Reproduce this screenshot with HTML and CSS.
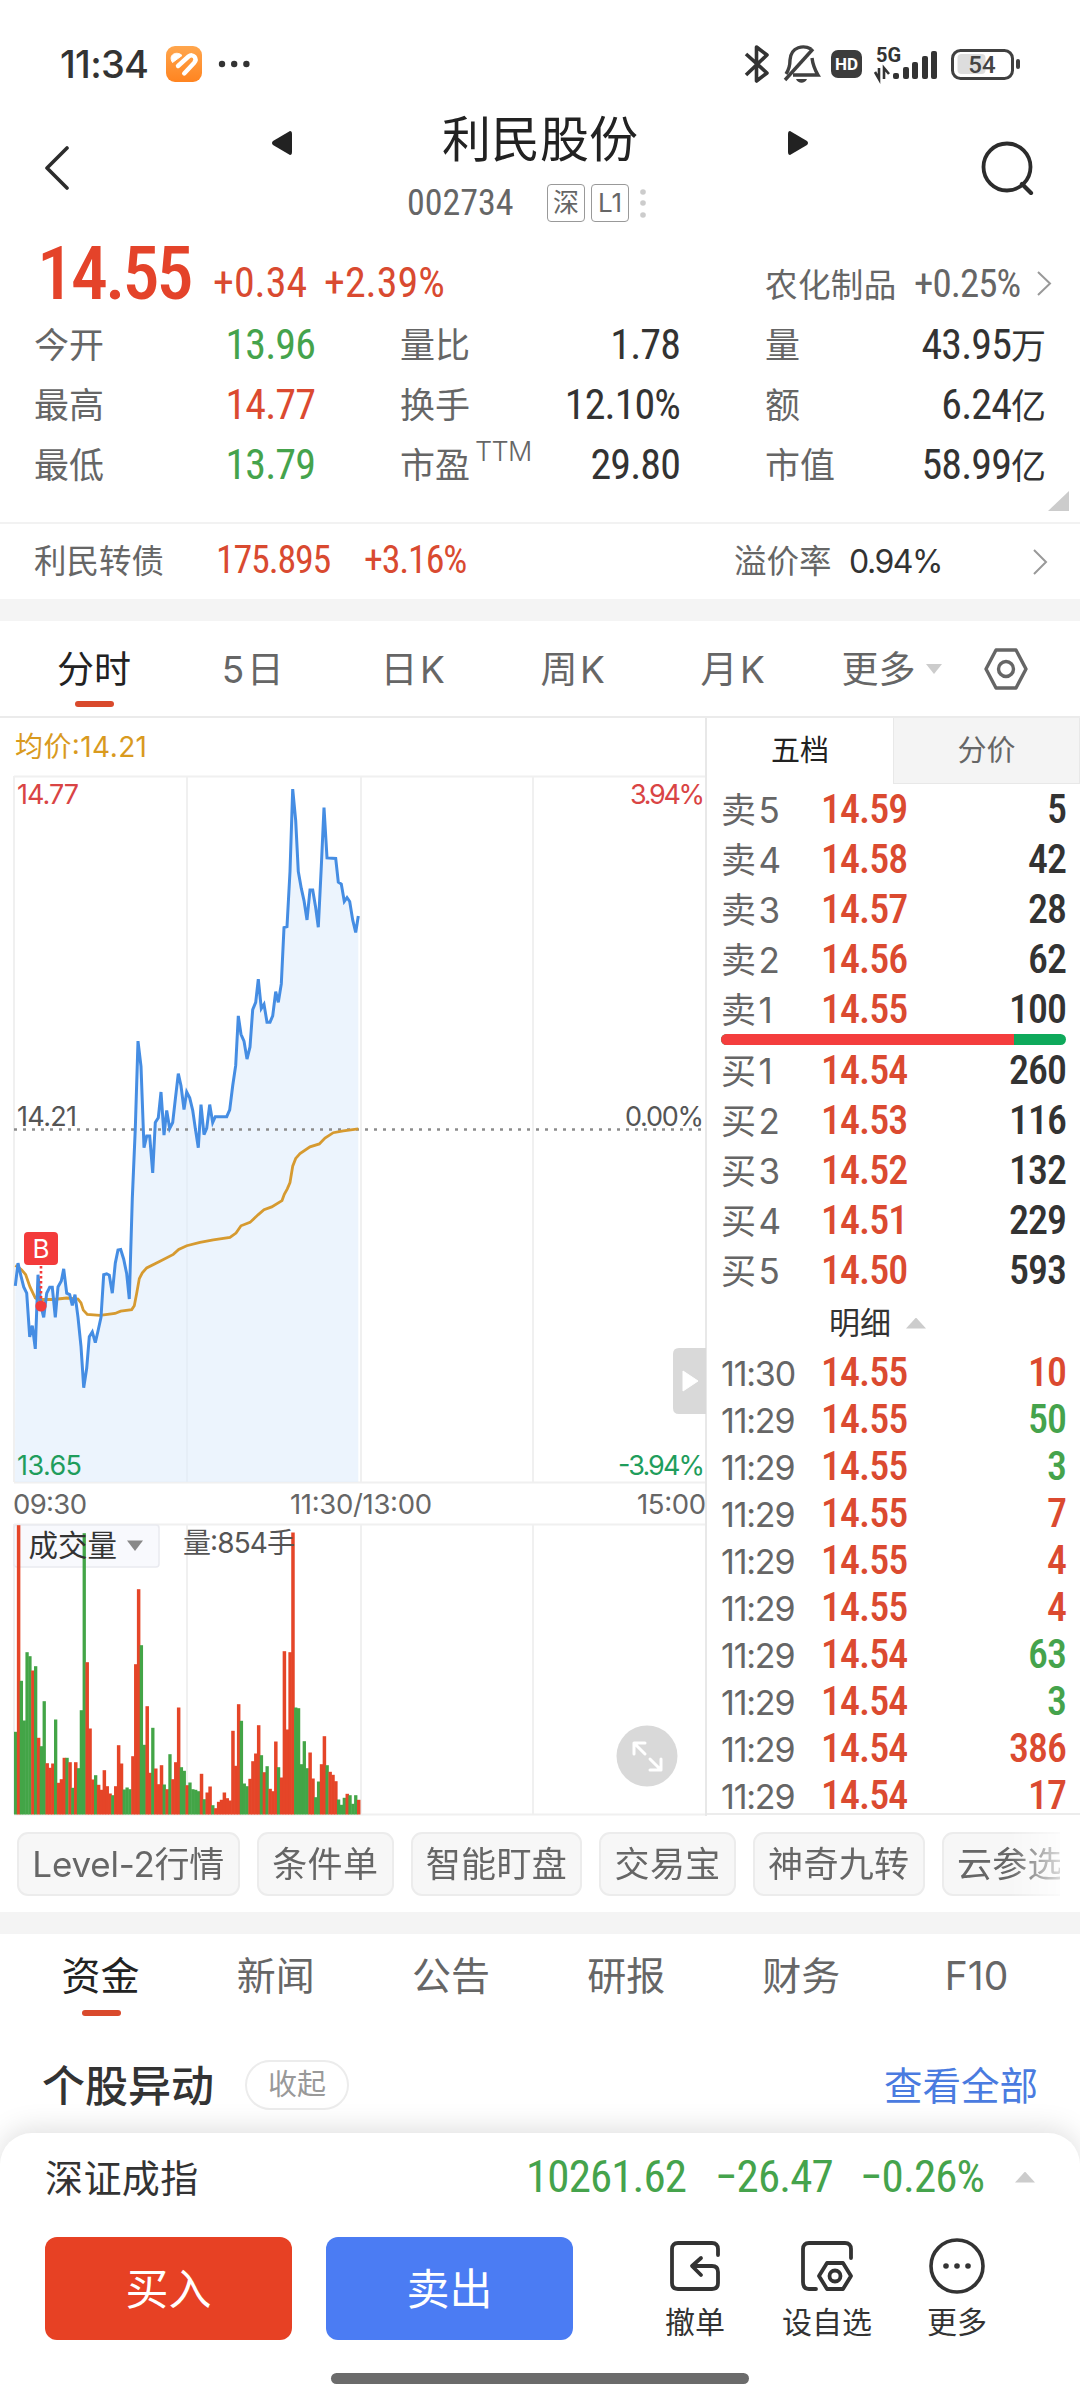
FILE: index.html
```html
<!DOCTYPE html>
<html lang="zh-CN">
<head>
<meta charset="utf-8">
<title>利民股份 002734</title>
<link rel="stylesheet" href="styles.css">
</head>
<body>
<div class="screen">
  <header class="status">
    <span class="clock">11:34</span>
    <svg class="app-icon" width="36" height="36" viewBox="0 0 36 36"><defs><linearGradient id="og" x1="0" y1="0" x2="0" y2="1"><stop offset="0" stop-color="#ffa64d"/><stop offset="1" stop-color="#ff8420"/></linearGradient></defs><rect width="36" height="36" rx="9" fill="url(#og)"/><path d="M6.500 16.500 C1.500 8.500 11 4.500 16 9.500Z" fill="#fff" stroke="#fff" stroke-linejoin="round"/><path d="M12 20 L22.500 10.500 C27 6.800 32 12.500 28 17 L18.200 27.500" fill="none" stroke="#fff" stroke-width="4.400" stroke-linecap="round" stroke-linejoin="round"/></svg>
    <svg class="more-dots" width="32" height="8" viewBox="0 0 32 8" fill="#333"><circle cx="4" cy="4" r="3.200"/><circle cx="16.200" cy="4" r="3.200"/><circle cx="28.400" cy="4" r="3.200"/></svg>
    <svg class="status-icons" width="280" height="40" viewBox="742 44 280 40">
      <path d="M746 54 L767 73 L756.500 81 V47 L767 55 L746 75" fill="none" stroke="#333" stroke-width="3.600" stroke-linejoin="round"/>
      <g fill="none" stroke="#404040" stroke-width="3.400"><path d="M811 49 C804 45 791 46 790 60 C790 68 788 71 786 74"/><path d="M812 58 C813 66 815 70 818 75 H793"/><path d="M785 80 L813 49"/></g><path d="M796 79 H807 C805 84 798 84 796 79Z" fill="#404040"/>
      <rect x="831" y="50" width="31" height="28" rx="7" fill="#3c3c3c"/><text x="846.500" y="70" class="hd">HD</text>
      <text x="876" y="62" class="g5">5G</text>
      <path d="M875 72 L879 79 V68 M884 79 V68 L889 74" fill="none" stroke="#333" stroke-width="2.600"/>
      <g fill="#333"><rect x="893" y="73" width="6" height="6" rx="2"/><rect x="903" y="67" width="6" height="12" rx="2"/><rect x="912" y="62" width="6" height="17" rx="2"/><rect x="922" y="56" width="6" height="23" rx="2"/><rect x="931" y="51" width="6" height="28" rx="2"/></g>
      <rect x="957.500" y="54" width="28" height="20" rx="4" fill="#ddd"/><rect x="952.500" y="50.500" width="60" height="28" rx="8" fill="none" stroke="#404040" stroke-width="3"/><rect x="1016" y="59" width="4" height="10" rx="2" fill="#404040"/><text x="982" y="73" class="bat">54</text>
    </svg>
  </header>

  <div class="titlebar">
    <svg width="26" height="44" viewBox="0 0 26 44"><path d="M23 2 L3 22 L23 42" fill="none" stroke="#2c2c2c" stroke-width="3.600" stroke-linecap="round" stroke-linejoin="round"/></svg>
    <div class="title-mid">
      <div class="name-row">
        <svg width="20" height="24" viewBox="0 0 20 24"><path d="M18 0 Q20 0 20 3 V21 Q20 24 18 24 L1 14 Q-1 12 1 10Z" fill="#222"/></svg>
        <h1>利民股份</h1>
        <svg width="20" height="24" viewBox="0 0 20 24"><path d="M2 0 Q0 0 0 3 V21 Q0 24 2 24 L19 14 Q21 12 19 10Z" fill="#222"/></svg>
      </div>
      <div class="code-row"><span class="num code">002734</span><span class="tag">深</span><span class="tag">L1</span><svg width="8" height="30" viewBox="0 0 8 30" fill="#ccc"><circle cx="4" cy="4" r="2.800"/><circle cx="4" cy="15" r="2.800"/><circle cx="4" cy="27" r="2.800"/></svg></div>
    </div>
    <svg width="54" height="54" viewBox="0 0 54 54"><circle cx="26" cy="26" r="23.500" fill="none" stroke="#2c2c2c" stroke-width="3.800"/><path d="M41 43 L50 52" stroke="#2c2c2c" stroke-width="4.200" stroke-linecap="round"/></svg>
  </div>

  <section class="quote">
    <div class="price-row">
      <b class="num big">14.55</b><span class="num chg">+0.34</span><span class="num chg">+2.39%</span>
      <span class="sector">农化制品</span><span class="num sector-pct">+0.25%</span>
      <svg class="chev" width="16" height="25" viewBox="0 0 16 25"><path d="M2 1 L14 12.500 L2 24" fill="none" stroke="#999" stroke-width="2"/></svg>
    </div>
    <div class="grid">
      <span>今开</span><span class="num dn">13.96</span><span>量比</span><span class="num">1.78</span><span>量</span><span class="num">43.95<small>万</small></span>
      <span>最高</span><span class="num up">14.77</span><span>换手</span><span class="num">12.10%</span><span>额</span><span class="num">6.24<small>亿</small></span>
      <span>最低</span><span class="num dn">13.79</span><span>市盈<i>TTM</i></span><span class="num">29.80</span><span>市值</span><span class="num">58.99<small>亿</small></span>
    </div>
    <div class="corner"></div>
  </section>
  <section class="bond">
    <span>利民转债</span><span class="num bp">175.895</span><span class="num bc">+3.16%</span><span class="prem">溢价率</span><span class="pv">0.94%</span>
    <svg class="chev" width="16" height="26" viewBox="0 0 16 26"><path d="M2 1 L14 13 L2 25" fill="none" stroke="#999" stroke-width="2"/></svg>
  </section>
  <div class="band"></div>

  <nav class="ktabs">
    <a class="on">分时</a><a>5日</a><a>日K</a><a>周K</a><a>月K</a><a>更多<em></em></a>
    <svg width="44" height="42" viewBox="0 0 44 42" fill="none" stroke="#666" stroke-width="3.400" stroke-linejoin="round"><path d="M12 2 H32 L42 21 L32 40 H12 L2 21Z"/><circle cx="22" cy="21" r="7.500"/></svg>
  </nav>

  <main class="board">
    <svg id="chart" class="chart" width="707" height="1098" viewBox="0 718 707 1098">
      <text x="15" y="757" class="t avg" textLength="132">均价:14.21</text>
      <g fill="none" stroke="#f0f0f0" stroke-width="2">
        <path d="M14 776.500 H706 M14 1482.500 H706 M14 1524.500 H706 M14 776 V1482 M14 1524 V1814 M187 776 V1482 M187 1524 V1814 M361 776 V1482 M361 1524 V1814 M533 776 V1482 M533 1524 V1814 M14 1814.500 H707"/>
      </g>
      <g id="price"></g>
      <path d="M14 1129.500 H706" stroke="#8c8c8c" stroke-width="2.600" stroke-dasharray="3 6"/>
      <g id="lines" fill="none"></g>
      <path d="M706 718 V1816" stroke="#e8e8e8" stroke-width="2"/>
      <path d="M41 1266 V1302" stroke="#f33b3b" stroke-width="2.600" stroke-dasharray="2.500 2.500"/><circle cx="41" cy="1306" r="5.600" fill="#f33b3b"/><rect x="24" y="1232" width="34" height="33" rx="4" fill="#f33b3b"/><text x="41" y="1258" class="t mark">B</text>
      <text x="17" y="804" class="t upl" textLength="62">14.77</text><text x="705" y="804" class="t upl end" textLength="75">3.94%</text>
      <text x="17" y="1126" class="t mid" textLength="60">14.21</text><text x="704" y="1126" class="t mid end" textLength="79">0.00%</text>
      <text x="17" y="1475" class="t dnl" textLength="65">13.65</text><text x="705" y="1475" class="t dnl end" textLength="87">-3.94%</text>
      <text x="13" y="1514" class="t time" textLength="74">09:30</text><text x="361" y="1514" class="t time c" textLength="142">11:30/13:00</text><text x="706" y="1514" class="t time end" textLength="69">15:00</text>
      <path d="M679 1348 H706 V1414 H679 Q673 1414 673 1408 V1354 Q673 1348 679 1348Z" fill="#d9d9d9"/><path d="M683 1371 L698 1381 L683 1391Z" fill="#fff" stroke="#fff" stroke-linejoin="round"/>
      <rect x="14" y="1525" width="145" height="42" rx="3" fill="#f8f9fd" stroke="#e9eaf0" stroke-width="1.500"/>
      <g id="volume"></g>
      <text x="28.500" y="1556" class="t vol">成交量</text><path d="M127 1540.500 H143 L135 1551Z" fill="#888"/>
      <text x="183" y="1553" class="t vnum" textLength="112">量:854手</text>
      <circle cx="647" cy="1756" r="30.500" fill="#d9d9d9"/><path d="M634 1754 V1743 H645 M634 1743 L645 1754 M661 1759 V1770 H650 M661 1770 L650 1759" fill="none" stroke="#fff" stroke-width="3" stroke-linecap="round" stroke-linejoin="round"/>
    </svg>
    <aside class="book">
      <div class="btabs"><b>五档</b><span>分价</span></div>
      <div id="asks" class="levels"></div>
      <div class="ratio"><i></i></div>
      <div id="bids" class="levels"></div>
      <div class="detail">明细<em></em></div>
      <div id="ticks" class="ticks"></div>
    </aside>
  </main>

  <div class="chips"><span>Level-2行情</span><span>条件单</span><span>智能盯盘</span><span>交易宝</span><span>神奇九转</span><span>云参选</span></div>
  <div class="band b2"></div>
  <nav class="ntabs"><a class="on">资金</a><a>新闻</a><a>公告</a><a>研报</a><a>财务</a><a>F10</a></nav>
  <div class="sect"><h2>个股异动</h2><span class="pill">收起</span><a>查看全部</a></div>

  <footer class="sheet">
    <div class="index"><span>深证成指</span><span class="num i1">10261.62</span><span class="num i2">−26.47</span><span class="num i3">−0.26%</span><em></em></div>
    <div class="actions">
      <button class="buy">买入</button><button class="sell">卖出</button>
      <div class="act a1"><svg width="54" height="54" viewBox="0 0 54 54" fill="none" stroke="#333" stroke-width="3.800" stroke-linecap="round" stroke-linejoin="round"><path d="M50 16 V10 Q50 4 44 4 H10 Q4 4 4 10 V44 Q4 50 10 50 H44 Q50 50 50 44 V33 Q50 27 44 27 H25"/><path d="M33 19 L24 27 L33 36"/></svg>撤单</div>
      <div class="act a2"><svg width="54" height="54" viewBox="0 0 54 54" fill="none" stroke="#333" stroke-width="3.800" stroke-linecap="round" stroke-linejoin="round"><path d="M51 19 V10 Q51 4 45 4 H9 Q3 4 3 10 V43 Q3 50 9 50 H16"/><path d="M27 24 H43 L51 37 L43 50 H27 L19 37Z"/><circle cx="35" cy="37" r="5.500"/></svg>设自选</div>
      <div class="act a3"><svg width="56" height="56" viewBox="0 0 56 56"><circle cx="28" cy="28" r="26" fill="none" stroke="#333" stroke-width="3.600"/><g fill="#333"><circle cx="17" cy="28" r="2.800"/><circle cx="28" cy="28" r="2.800"/><circle cx="39" cy="28" r="2.800"/></g></svg>更多</div>
    </div>
    <div class="home"></div>
  </footer>
</div>
<script src="script.js"></script>
</body>
</html>
```
FILE: styles.css
```css
* { box-sizing: border-box; }
body { margin: 0; background: #fff; font-family: Inter, "Noto Sans CJK SC", sans-serif; color: #333; }
h1, h2 { margin: 0; font-weight: 400; }
i, em { font-style: normal; }
svg { display: block; flex: none; }
.screen { width: 1080px; height: 2400px; overflow: hidden; display: flex; flex-direction: column; white-space: nowrap; }
.screen > * { flex: none; }
.num { font-family: Roboto, "Noto Sans CJK SC", sans-serif; font-stretch: 75%; font-weight: 450; }

.status { height: 108px; padding: 20px 58px 0 60px; display: flex; align-items: center; }
.clock { font-size: 38px; font-weight: 500; letter-spacing: -.7px; width: 106px; }
.more-dots { margin-left: 16px; }
.status-icons { margin-left: auto; }
.hd { font: 700 17px Roboto; fill: #fff; text-anchor: middle; }
.g5 { font: 700 20px Roboto; fill: #333; }
.bat { font: 500 24px Roboto; fill: #444; text-anchor: middle; }

.titlebar { height: 124px; padding: 0 45px 0 44px; display: flex; align-items: flex-start; }
.titlebar > svg:first-child { margin-top: 38px; }
.titlebar > svg:last-child { margin-top: 33px; margin-left: auto; }
.title-mid { width: 536px; margin-left: 202px; }
.name-row { height: 64px; display: flex; align-items: center; justify-content: space-between; }
.name-row svg { margin-top: 6px; }
h1 { font-size: 49px; line-height: 64px; color: #222; }
.code-row { height: 62px; display: flex; align-items: center; padding-left: 135px; }
.code { font-size: 36px; font-weight: 400; color: #666; width: 140px; }
.tag { width: 38px; height: 38px; border: 1.500px solid #999; border-radius: 4px; font-size: 26px; line-height: 36px; text-align: center; color: #666; margin-right: 6px; }
.code-row svg { margin-left: 4px; }

.quote { height: 290px; padding: 0 28px 0 35px; position: relative; }
.price-row { height: 82px; display: flex; align-items: baseline; line-height: 80px; }
.big { font-size: 74px; color: #e4432a; width: 178px; padding-left: 2px; letter-spacing: -3px; font-weight: 500; position: relative; top: 2px; }
.chg { font-size: 42px; color: #d94a30; font-weight: 400; width: 111px; }
.sector { font-size: 32.500px; line-height: 78px; letter-spacing: .4px; color: #666; margin-left: 330px; width: 149px; }
.sector-pct { font-size: 39px; font-weight: 400; color: #666; width: 121px; letter-spacing: -1px; }
.chev { align-self: center; }
.price-row > * { flex: none; }
.price-row .chev { margin-top: 20px; margin-left: 1px; }
.grid { display: grid; grid-template-columns: 150px 131px 234px 131px 169px 197px; grid-auto-rows: 60px; line-height: 63px; font-size: 35px; color: #666; margin-left: -1px; }
.grid > span:nth-child(6n+3), .grid > span:nth-child(6n+5) { padding-left: 85px; }
.grid > .num { font-size: 42px; line-height: 61px; letter-spacing: -.9px; text-align: right; color: #333; }
.grid small { font-size: 35px; font-weight: 400; letter-spacing: 0; }
.grid .up, .up { color: #db4a30 !important; }
.grid .dn, .dn { color: #45a34c !important; }
.grid i { font-size: 27px; position: relative; top: -17px; margin-left: 5px; font-weight: 300; letter-spacing: -.7px; }
.corner { position: absolute; left: 1048px; top: 259px; width: 21px; height: 20px; background: #ccc; clip-path: polygon(100% 0, 100% 100%, 0 100%); }
.bond { height: 77px; border-top: 2px solid #f2f2f2; padding-left: 34px; display: flex; line-height: 73px; font-size: 32.500px; color: #666; align-items: baseline; }
.bond > span:first-child { width: 182px; }
.bond .num { font-size: 38px; color: #d94a30; font-weight: 400; letter-spacing: -1.200px; }
.bond .bp { width: 148px; } .bond .bc { width: 370px; }
.prem { width: 115px; }
.bond .pv { font-size: 32px; letter-spacing: -1.500px; color: #333; width: 183px; }
.band { height: 22px; background: #f4f4f4; }

.ktabs { height: 97px; border-bottom: 2px solid #ebebeb; display: flex; padding-left: 14px; color: #666; }
.ktabs a { width: 160px; text-align: center; font-size: 37px; line-height: 98px; position: relative; }
.ktabs a:nth-child(n+2) { letter-spacing: 2.500px; }
.ktabs a:nth-child(6) { width: 170px; padding-right: 41px; letter-spacing: 0; }
.ktabs svg { margin: 27px 0 0 0; }
.ktabs em { position: absolute; right: 42px; top: 43px; width: 16px; height: 10px; background: #ccc; clip-path: polygon(0 0, 100% 0, 50% 100%); }
a.on { color: #222; position: relative; }
a.on::after { content: ""; position: absolute; left: 50%; margin-left: -19px; bottom: 9px; width: 39px; height: 6px; border-radius: 3px; background: #d94a2c; }

.board { display: flex; height: 1097px; }
.t { font-family: Inter, "Noto Sans CJK SC", sans-serif; font-size: 27px; }
.end { text-anchor: end; } .c { text-anchor: middle; }
.avg { font-size: 28px; fill: #d99a1e; }
.upl { fill: #d94444; } .dnl { fill: #1f9d5c; } .mid { fill: #555; }
.time { fill: #666; font-size: 27.500px; }
.mark { fill: #fff; font-size: 26px; text-anchor: middle; }
.vol { font-size: 29.500px; fill: #333; } .vnum { font-size: 28px; fill: #555; }

.book { width: 373px; border-bottom: 2px solid #ececec; }
.btabs { height: 67px; display: flex; font-size: 29px; line-height: 66px; text-align: center; }
.btabs b { width: 186px; font-weight: 400; color: #222; }
.btabs span { flex: 1; height: 66px; background: #f4f4f4; border: 1px solid #e8e8e8; border-top: 0; color: #666; }
.levels, .ticks { padding: 0 14px 0 14px; }
.row { display: grid; grid-template-columns: 100px 113px 1fr; height: 50px; line-height: 50px; align-items: baseline; font-size: 34px; color: #666; }
.levels .row span:first-child { font-size: 35px; letter-spacing: 2.500px; }
.row .num { font-size: 40px; letter-spacing: -1px; color: #333; font-weight: 460; }
.row .num:last-child { text-align: right; }
.ratio { height: 11px; margin: -1px 14px 0 14px; border-radius: 6px; background: #0ea95b; overflow: hidden; }
.ratio i { display: block; width: 293px; height: 11px; background: #f43d3d; }
#bids { padding-top: 1px; margin-bottom: 1px; }
.detail { height: 52px; line-height: 52px; font-size: 31px; padding-left: 122px; display: flex; align-items: center; }
.detail em { width: 20px; height: 11px; margin-left: 15px; background: #ccc; clip-path: polygon(50% 0, 100% 100%, 0 100%); }
.ticks .row { height: 47px; line-height: 47px; font-size: 34px; }
.ticks .row span:first-child { letter-spacing: -1.200px; }

.chips { height: 97px; padding: 17px 0 0 17px; display: flex; gap: 17px; overflow: hidden; width: 1060px; -webkit-mask: linear-gradient(90deg, #000 1010px, rgba(0,0,0,.25) 1060px); }
.chips span { flex: none; height: 64px; border: 2px solid #ececec; border-radius: 11px; background: #f7f7f7; font-size: 35px; line-height: 60px; padding: 0 13.300px; color: #666; letter-spacing: .3px; }
.chips span:first-child { letter-spacing: -.2px; width: 223px; }
.b2 { height: 22px; }
.ntabs { height: 91px; display: flex; padding-left: 13px; color: #666; }
.ntabs a { width: 175.200px; text-align: center; font-size: 39px; line-height: 84px; }
.sect { height: 116px; display: flex; align-items: center; padding-left: 42px; }
h2 { font-size: 43px; font-weight: 500; color: #333; }
.pill { width: 104px; height: 50px; border: 2px solid #ececec; border-radius: 25px; margin: 3px 0 0 31px; font-size: 29px; line-height: 46px; text-align: center; color: #999; }
.sect a { font-size: 38.500px; color: #4a7be0; margin-left: auto; margin-right: 42px; }

.sheet { position: absolute; top: 2133px; left: 0; width: 1080px; height: 267px; background: #fff; border-radius: 32px 32px 0 0; box-shadow: 0 -4px 28px rgba(0,0,0,.13); padding: 0 45px; }
.index { height: 88px; display: flex; line-height: 88px; font-size: 38px; align-items: baseline; }
.index > span:first-child { width: 481px; letter-spacing: .4px; }
.index .num { font-size: 45px; font-weight: 400; color: #45a34c; letter-spacing: -.9px; }
.i1 { width: 189px; } .i2 { width: 145px; } .i3 { width: 155px; }
.index em { width: 20px; height: 11px; align-self: center; background: #ccc; clip-path: polygon(50% 0, 100% 100%, 0 100%); }
.actions { display: flex; padding-top: 16px; height: 152px; }
button { width: 247px; height: 103px; border: 0; border-radius: 12px; color: #fff; font: 400 43px Inter, "Noto Sans CJK SC", sans-serif; line-height: 102px; padding: 0; }
.buy { background: #e74124; } .sell { background: #4b7cf3; margin-left: 34px; }
.act { display: flex; flex-direction: column; align-items: center; font-size: 30px; line-height: 56px; }
.a1 { width: 120px; margin-left: 62px; } .a2 { width: 120px; margin-left: 12px; } .a3 { width: 120px; margin-left: 10px; }
.act svg { height: 56px; margin: 1px 0 0; }
.home { width: 418px; height: 11px; border-radius: 6px; background: #6b6b6b; margin-left: 286px; }
```
FILE: script.js
```js
// One volume bar per trading minute: colour letter followed by the bar height.
const bars = "g248 r868 g401 g282 g487 g475 r432 g445 r230 g205 g340 r154 r140 r153 g285 r95 r106 r170 g170 r157 g80 r157 g139 g313 g844 r457 r258 r105 g118 r89 r74 r133 r85 r63 g58 r85 r208 r153 g75 g81 g76 r175 r451 r676 g508 g209 r325 r125 g260 r138 r91 r148 g90 r76 g181 r106 r157 r321 g142 g131 r88 g96 g76 g74 g70 r122 g46 r66 r84 g28 r19 r38 r44 r66 r49 r42 r251 r146 r331 g281 g93 g85 r107 r160 r183 r268 g178 r127 g145 r77 r70 r219 g142 r111 r490 r255 r487 r846 g321 g319 g151 g220 g139 r186 r108 g52 g99 r151 r235 g148 r128 r119 r100 g45 g29 g50 r62 g58 g32 g58 r44".split(" ");
document.getElementById("volume").innerHTML = bars.map((b, i) => {
  const h = b.slice(1) / 3;
  return `<rect x="${(14 + i * 2.858).toFixed(2)}" y="${(1814.5 - h).toFixed(1)}" width="${b[0] === "r" ? 3.5 : 3.3}" height="${h.toFixed(1)}" fill="${b[0] === "r" ? "#e54528" : "#43a547"}"/>`;
}).join("");

// Intraday curves, in chart units.
const price = "46,1085 54,1038 63,1065 71,1087 80,1100 89,1190 97,1167 106,1215 114,1062 123,1127 131,1150 140,1100 149,1088 157,1088 166,1150 174,1087 184,1075 191,1050 200,1100 209,1103 217,1125 225,1103 234,1150 243,1210 251,1295 260,1255 268,1190 277,1180 286,1202 294,1178 303,1150 311,1062 320,1060 328,1063 337,1100 346,1038 354,1011 362,1010 371,1030 380,1060 388,1112 397,905 406,760 414,580 423,632 432,800 440,776 449,776 458,852 466,748 475,738 483,685 492,774 500,723 509,760 518,748 526,700 535,647 543,672 552,721 560,685 569,697 578,723 586,760 595,800 603,711 612,773 620,760 629,711 638,748 646,736 680,736 689,722 698,672 707,630 715,528 723,566 732,580 741,617 750,592 758,515 767,500 775,452 784,513 792,504 801,541 810,541 818,528 827,478 835,500 844,462 852,346 861,344 870,230 878,60 887,125 895,230 904,265 912,290 921,330 930,268 938,268 947,305 955,345 964,220 972,98 981,202 1007,203 1015,252 1024,256 1033,292 1041,284 1049,292 1058,330 1067,356 1075,322";
const average = "46,1043 54,1046 65,1052 77,1062 90,1087 106,1110 115,1113 160,1113 200,1110 234,1112 243,1120 250,1135 262,1144 300,1146 345,1142 362,1137 395,1134 403,1126 410,1100 418,1070 427,1058 440,1048 480,1034 520,1020 536,1010 560,1002 600,995 640,990 690,985 708,976 723,961 750,954 775,938 792,928 815,922 846,909 853,896 862,885 870,872 878,838 887,822 900,812 930,798 958,792 975,780 1000,769 1030,765 1075,761";
const plot = s => s.split(" ").map(p => {
  const [x, y] = p.split(",");
  return `${(x / 3).toFixed(1)},${(760 + y / 2.0632).toFixed(1)}`;
}).join(" ");
document.getElementById("price").innerHTML = `<polygon points="15,1482 ${plot(price)} 358.300,1482" fill="#e1eefc" fill-opacity=".62"/>`;
document.getElementById("lines").innerHTML =
  `<polyline points="${plot(average)}" stroke="#d69a30" stroke-width="2.800"/><polyline points="${plot(price)}" stroke="#458de3" stroke-width="3"/>`;

const level = ([name, p, v]) => `<div class="row"><span>${name}</span><span class="num up">${p}</span><span class="num">${v}</span></div>`;
document.getElementById("asks").innerHTML = [["卖5", "14.59", 5], ["卖4", "14.58", 42], ["卖3", "14.57", 28], ["卖2", "14.56", 62], ["卖1", "14.55", 100]].map(level).join("");
document.getElementById("bids").innerHTML = [["买1", "14.54", 260], ["买2", "14.53", 116], ["买3", "14.52", 132], ["买4", "14.51", 229], ["买5", "14.50", 593]].map(level).join("");
document.getElementById("ticks").innerHTML = [["11:30", "14.55", 10, "up"], ["11:29", "14.55", 50, "dn"], ["11:29", "14.55", 3, "dn"], ["11:29", "14.55", 7, "up"], ["11:29", "14.55", 4, "up"], ["11:29", "14.55", 4, "up"], ["11:29", "14.54", 63, "dn"], ["11:29", "14.54", 3, "dn"], ["11:29", "14.54", 386, "up"], ["11:29", "14.54", 17, "up"]]
  .map(([t, p, v, c]) => `<div class="row"><span>${t}</span><span class="num up">${p}</span><span class="num ${c}">${v}</span></div>`).join("");
```
